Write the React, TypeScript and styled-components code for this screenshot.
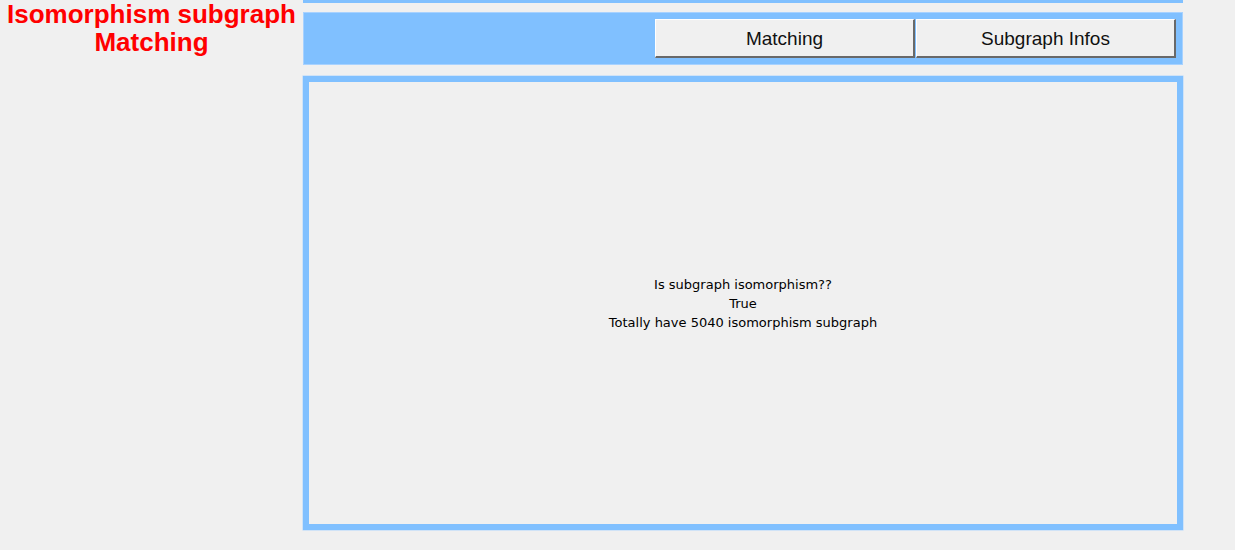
import { createGlobalStyle } from 'styled-components';
import styled from 'styled-components';

const GlobalStyle = createGlobalStyle`
  html, body {
    margin: 0;
    padding: 0;
    background: #f0f0f0;
  }
`

const Page = styled.div`
  display: flex;
  width: 1235px;
  height: 550px;
  background: #f0f0f0;
`

const Side = styled.div`
  width: 303px;
  flex-shrink: 0;
`

const Title = styled.h1`
  margin: 0;
  padding-top: 0;
  text-align: center;
  font-family: "Liberation Sans", Arial, sans-serif;
  font-weight: bold;
  font-size: 26px;
  line-height: 28px;
  color: #ff0000;
`

const Main = styled.div`
  width: 880px;
  display: flex;
  flex-direction: column;
`

const Stripe = styled.div`
  height: 3px;
  background: #80c0ff;
`

const Toolbar = styled.div`
  margin-top: 9px;
  height: 53px;
  box-sizing: border-box;
  background: #80c0ff;
  box-shadow: inset 0 0 0 1px #a8d2ff;
  display: flex;
  justify-content: flex-end;
  align-items: flex-start;
  padding: 7px 7px 0 0;
`

const Button = styled.button`
  width: 260px;
  height: 39px;
  box-sizing: border-box;
  margin: 0;
  padding: 2px 0 0 0;
  background: #f0f0f0;
  border-style: solid;
  border-width: 1px 2px 2px 1px;
  border-color: #ffffff #696969 #696969 #ffffff;
  font-family: "Liberation Sans", Arial, sans-serif;
  font-size: 19px;
  color: #111;
  cursor: pointer;
  & + & {
    margin-left: 1px;
  }
`

const Card = styled.div`
  margin-top: 11px;
  height: 454px;
  box-sizing: border-box;
  border: 6px solid #80c0ff;
  box-shadow: 0 0 0 0.5px #b0d6ff;
  display: flex;
  align-items: center;
  justify-content: center;
`

const Result = styled.div`
  text-align: center;
  font-family: Tahoma, "DejaVu Sans", sans-serif;
  font-size: 13px;
  line-height: 19px;
  color: #000;
`

export default function App() {
  return (
    <>
      <GlobalStyle />
      <Page>
        <Side>
          <Title>
            Isomorphism subgraph
            <br />
            Matching
          </Title>
        </Side>
        <Main>
          <Stripe />
          <Toolbar>
            <Button>Matching</Button>
            <Button>Subgraph Infos</Button>
          </Toolbar>
          <Card>
            <Result>
              Is subgraph isomorphism??
              <br />
              True
              <br />
              Totally have 5040 isomorphism subgraph
            </Result>
          </Card>
        </Main>
      </Page>
    </>
  );
}
